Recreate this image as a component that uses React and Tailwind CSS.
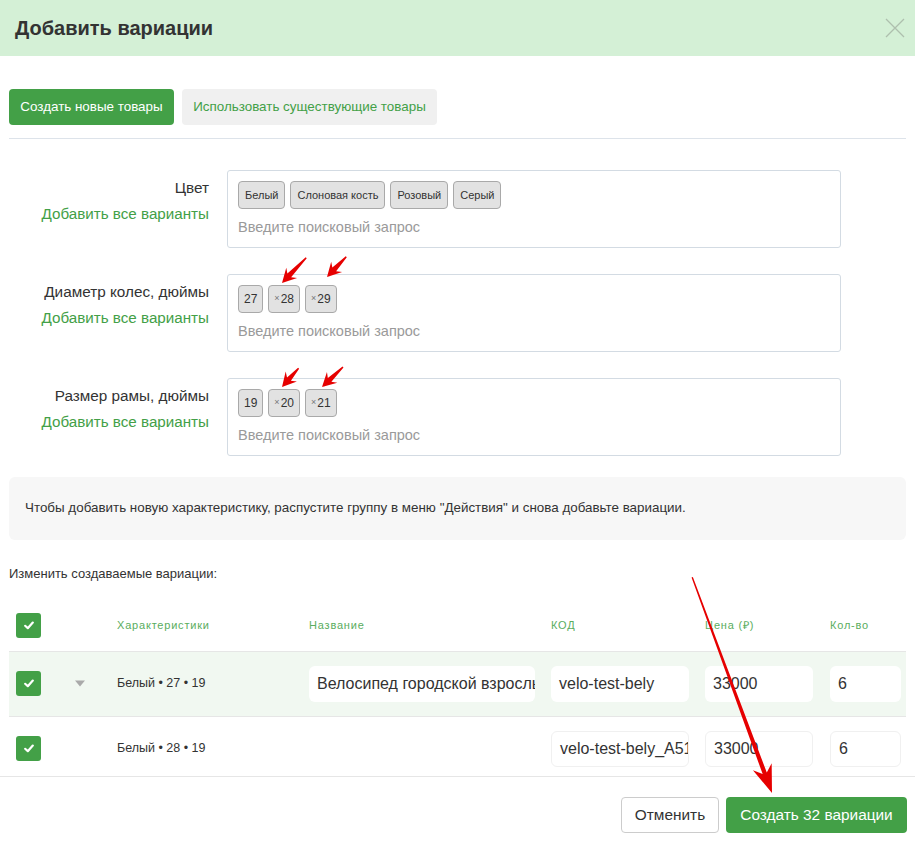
import React from "react";

const font = { fontFamily: '"Liberation Sans", Arial, sans-serif' };

function Arrow({ x, y, angle, len, head = 14, hw = 7.5, sw = 2.6 }) {
  const d = `M0 0 L${-head} ${-hw} L${-head * 0.75} ${-sw} L${-len} -0.7 L${-len} 0.7 L${-head * 0.75} ${sw} L${-head} ${hw} Z`;
  return <path d={d} fill="#e60000" transform={`translate(${x} ${y}) rotate(${angle})`} />;
}

function Tag({ children, x, num }) {
  return (
    <span
      className={
        "inline-flex items-center h-[28px] rounded-[4px] border border-[#a9a9a9] bg-[#e2e2e2] text-[#333] " +
        (num ? "px-[5px] text-[12px]" : "px-[6px] text-[11px]")
      }
    >
      {x && <span className="text-[9px] text-[#777] mr-[1px]">×</span>}
      {children}
    </span>
  );
}

function FieldRow({ label, tags, num }) {
  return (
    <div className="flex">
      <div className="w-[200px] text-right pt-[8px]">
        <div className="text-[15.3px] text-[#333] leading-[20px]">{label}</div>
        <div className="text-[15.2px] text-[#43a047] leading-[20px] mt-[6px]">Добавить все варианты</div>
      </div>
      <div className="ml-[18px] w-[614px] h-[78px] border border-[#d3dbe3] rounded-[3px] px-[10px] pt-[10px]">
        <div className="flex gap-[5px]">
          {tags.map((t) => (
            <Tag key={t.t} x={t.x} num={num}>{t.t}</Tag>
          ))}
        </div>
        <div className="text-[14.5px] text-[#9a9a9a] mt-[8px]">Введите поисковый запрос</div>
      </div>
    </div>
  );
}

function Check() {
  return (
    <div className="w-[25px] h-[25px] shrink-0 rounded-[3px] bg-[#43a047] flex items-center justify-center">
      <svg width="10" height="9" viewBox="0 0 10 9">
        <path d="M1.2 4.8 L3.8 7.2 L8.8 1.6" stroke="#fff" strokeWidth="2.2" fill="none" strokeLinecap="round" strokeLinejoin="round" />
      </svg>
    </div>
  );
}

function Field({ w, children, border }) {
  return (
    <div
      className={
        "h-[36px] shrink-0 rounded-[6px] bg-white flex items-center px-[8px] overflow-hidden whitespace-nowrap text-[16px] text-[#333] " +
        (border ? "border border-[#f0f0f0] " : "") +
        w
      }
    >
      {children}
    </div>
  );
}

function Row({ bg, chars, name, code, showTri }) {
  return (
    <div className={"flex items-center h-[65px] pl-[7px] border-t border-[#e6e6e6] " + bg}>
      <Check />
      <div className="ml-[33px] w-[12px] shrink-0">
        {showTri && (
          <svg width="12" height="7" viewBox="0 0 12 7">
            <path d="M1 0.5 L11 0.5 L6 6.5 Z" fill="#aaa" />
          </svg>
        )}
      </div>
      <div className="ml-[31px] w-[192px] shrink-0 text-[12.5px] text-[#333]">{chars}</div>
      {name ? <Field w="w-[226px]">{name}</Field> : <div className="w-[226px] shrink-0" />}
      <div className="ml-[16px] shrink-0">
        <Field w="w-[138px]" border={!name}>{code}</Field>
      </div>
      <div className="ml-[16px] shrink-0">
        <Field w="w-[108px]" border={!name}>33000</Field>
      </div>
      <div className="ml-[17px] shrink-0">
        <Field w="w-[71px]" border={!name}>6</Field>
      </div>
    </div>
  );
}

export default function App() {
  return (
    <div className="relative w-[915px] h-[849px] bg-white overflow-hidden" style={font}>
      <div className="h-[56px] bg-[#d4f0d6] flex items-center justify-between px-[15px]">
        <h1 className="text-[20px] font-bold text-[#333]">Добавить вариации</h1>
        <svg width="20" height="20" viewBox="0 0 20 20" className="mr-[-5px]">
          <path d="M1 1 L19 19 M19 1 L1 19" stroke="#aebfae" strokeWidth="1.3" />
        </svg>
      </div>

      <div className="px-[9px]">
        <div className="flex gap-[8px] mt-[33px]">
          <button className="w-[165px] h-[36px] rounded-[4px] bg-[#43a047] text-white text-[13.4px]">Создать новые товары</button>
          <button className="w-[255px] h-[36px] rounded-[4px] bg-[#f0f0f0] text-[#43a047] text-[13.4px]">Использовать существующие товары</button>
        </div>
        <div className="mt-[13px] border-t border-[#dde3ea]" />

        <div className="flex flex-col gap-[26px] mt-[31px]">
          <FieldRow
            label="Цвет"
            tags={[{ t: "Белый" }, { t: "Слоновая кость" }, { t: "Розовый" }, { t: "Серый" }]}
          />
          <FieldRow label="Диаметр колес, дюймы" num tags={[{ t: "27" }, { t: "28", x: true }, { t: "29", x: true }]} />
          <FieldRow label="Размер рамы, дюймы" num tags={[{ t: "19" }, { t: "20", x: true }, { t: "21", x: true }]} />
        </div>

        <div className="mt-[21px] h-[63px] rounded-[6px] bg-[#f7f7f7] flex items-center pl-[16px] text-[13.4px] text-[#333]">
          Чтобы добавить новую характеристику, распустите группу в меню "Действия" и снова добавьте вариации.
        </div>

        <div className="mt-[24px] text-[13px] text-[#333]">Изменить создаваемые вариации:</div>

        <div className="mt-[17px] flex items-center h-[50px] pl-[7px] text-[11px] tracking-[0.8px] text-[#5aad5e]">
          <Check />
          <div className="ml-[76px] w-[192px] shrink-0">Характеристики</div>
          <div className="w-[242px] shrink-0">Название</div>
          <div className="w-[154px] shrink-0">КОД</div>
          <div className="w-[125px] shrink-0">Цена (₽)</div>
          <div>Кол-во</div>
        </div>

        <div className="h-[125px] overflow-hidden">
          <Row bg="bg-[#f1f8f1]" chars="Белый • 27 • 19" name="Велосипед городской взрослый" code="velo-test-bely" showTri />
          <Row bg="bg-white" chars="Белый • 28 • 19" code="velo-test-bely_A51" />
        </div>
      </div>

      <div className="border-t border-[#e6e6e6] flex justify-end gap-[7px] pt-[20px] pr-[8px]">
        <button className="w-[98px] h-[36px] rounded-[4px] border border-[#ccc] bg-white text-[15.4px] text-[#333]">Отменить</button>
        <button className="w-[181px] h-[36px] rounded-[4px] bg-[#43a047] text-[15.4px] text-white">Создать 32 вариации</button>
      </div>

      <svg className="absolute left-0 top-0 pointer-events-none" width="915" height="849" viewBox="0 0 915 849">
        <Arrow x={282} y={283} angle={133.8} len={35} />
        <Arrow x={327} y={277} angle={133.5} len={28} />
        <Arrow x={282} y={387} angle={131.6} len={25} />
        <Arrow x={322} y={387} angle={136.4} len={29} />
        <Arrow x={772} y={793} angle={69.7} len={230} head={28} hw={10} sw={2.2} />
      </svg>
    </div>
  );
}
